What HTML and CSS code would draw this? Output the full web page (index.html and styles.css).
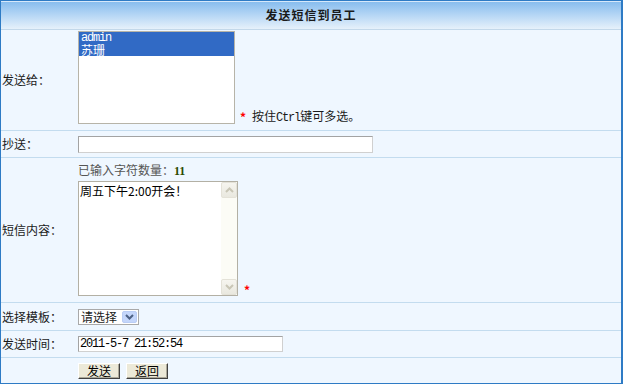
FILE: index.html
```html
<!DOCTYPE html>
<html lang="zh-CN">
<head>
<meta charset="utf-8">
<title>发送短信到员工</title>
<link rel="stylesheet" href="styles.css">
</head>
<body>
<div class="panel">
  <div class="head">发送短信到员工</div>

  <div class="row r-to">
    <div class="label">发送给<span class="colon">：</span></div>
    <div class="field f-to">
      <div class="listbox">
        <div class="opt sel mono">admin</div>
        <div class="opt sel">苏珊</div>
      </div>
      <span class="req">*</span>
      <span class="hint">按住<span class="mono">Ctrl</span>键可多选<span class="colon">。</span></span>
    </div>
  </div>

  <div class="row r-cc">
    <div class="label">抄送<span class="colon">：</span></div>
    <div class="field"><input class="txt txt-cc" type="text" value=""></div>
  </div>

  <div class="row r-msg">
    <div class="label">短信内容<span class="colon">：</span></div>
    <div class="field f-msg">
      <div class="count">已输入字符数量<span class="colon">：</span><b class="num">11</b></div>
      <div class="msg-line">
        <div class="ta">
          <textarea class="ta-text">周五下午2:00开会！</textarea>
          <div class="sb">
            <div class="sb-btn"><svg width="9" height="6" viewBox="0 0 9 6"><path d="M1 5 L4.5 1.5 L8 5" fill="none" stroke="#c9c6b6" stroke-width="2"/></svg></div>
            <div class="sb-btn"><svg width="9" height="6" viewBox="0 0 9 6"><path d="M1 1 L4.5 4.5 L8 1" fill="none" stroke="#c9c6b6" stroke-width="2"/></svg></div>
          </div>
        </div>
        <span class="req req-msg">*</span>
      </div>
    </div>
  </div>

  <div class="row r-tpl">
    <div class="label">选择模板<span class="colon">：</span></div>
    <div class="field">
      <div class="dropdown">
        <span class="dd-text">请选择</span>
        <span class="dd-btn"><svg width="9" height="6" viewBox="0 0 9 6"><path d="M1 1 L4.5 4.5 L8 1" fill="none" stroke="#4d6185" stroke-width="2"/></svg></span>
      </div>
    </div>
  </div>

  <div class="row r-time">
    <div class="label">发送时间<span class="colon">：</span></div>
    <div class="field"><input class="txt txt-time mono" type="text" value="2011-5-7 21:52:54"></div>
  </div>

  <div class="row r-btn">
    <div class="label"></div>
    <div class="field f-btn">
      <button class="btn" type="button">发送</button>
      <button class="btn" type="button">返回</button>
    </div>
  </div>
</div>
</body>
</html>
```

FILE: styles.css
```css
html, body {
  margin: 0;
  padding: 0;
}

body {
  font: 12px "Noto Sans CJK SC", "Liberation Sans", sans-serif;
  color: #1a1a1a;
  background: #ffffff;
}

.panel {
  width: 623px;
  height: 384px;
  box-sizing: border-box;
  border: 1px solid #2e7bc5;
  border-right-width: 2px;
  background: #eff7ff;
}

.head {
  height: 28px;
  border-bottom: 1px solid #c3d8ea;
  background: linear-gradient(#84bbee, #e6f1fb);
  box-shadow: inset 0 1px 0 #d6e8fa;
  display: flex;
  align-items: center;
  justify-content: center;
  font-weight: bold;
  letter-spacing: 1px;
  line-height: 14px;
  color: #1a1a1a;
}

.row {
  display: grid;
  grid-template-columns: 77px 1fr;
  align-items: center;
  border-bottom: 1px solid #c3dcef;
}

.row:last-child {
  border-bottom: none;
}

.r-to { height: 100px; }
.r-cc { height: 26px; }
.r-msg { height: 144px; }
.r-tpl { height: 27px; }
.r-time { height: 26px; }
.r-btn { height: 25px; }

.label {
  padding-left: 1px;
  line-height: 14px;
  white-space: nowrap;
}

.colon {
  font-family: "Noto Sans CJK TC", "Noto Sans CJK SC", sans-serif;
}

.field {
  display: flex;
  align-items: center;
  line-height: 14px;
}

.mono {
  font-family: "Liberation Mono", "DejaVu Sans Mono", monospace;
  letter-spacing: -1.2px;
}

/* 发送给 */
.f-to {
  align-self: start;
  align-items: flex-end;
  padding-top: 1px;
}

.listbox {
  width: 157px;
  height: 93px;
  box-sizing: border-box;
  border: 1px solid #b7b4a8;
  background: #ffffff;
}

.opt {
  height: 12px;
  line-height: 12px;
  padding-left: 2px;
  white-space: nowrap;
}

.opt.sel {
  background: #316ac5;
  color: #ffffff;
}

.req {
  color: #ff0000;
  margin-left: 5px;
  line-height: 14px;
  font-weight: bold;
}

.hint {
  margin-left: 6px;
  margin-bottom: -1px;
  white-space: nowrap;
}

/* 抄送 */
.txt {
  box-sizing: border-box;
  height: 17px;
  margin: 0;
  padding: 0 1px;
  border: 1px solid;
  border-color: #a3a3a3 #d0d0d0 #d0d0d0 #a3a3a3;
  background: #ffffff;
  font: 12px "Noto Sans CJK SC", sans-serif;
  color: #000000;
  outline: none;
}

.txt-cc {
  width: 295px;
}

.txt-time {
  width: 205px;
  height: 16px;
  font-family: "Liberation Mono", "DejaVu Sans Mono", monospace;
  letter-spacing: -1.2px;
}

/* 短信内容 */
.f-msg {
  align-self: start;
  flex-direction: column;
  align-items: flex-start;
  padding-top: 5px;
}

.count {
  color: #555555;
  height: 14px;
}

.num {
  color: #2a4a00;
  font-family: "Liberation Serif", serif;
  font-size: 12px;
}

.msg-line {
  display: flex;
  align-items: flex-end;
  margin-top: 4px;
}

.ta {
  width: 160px;
  height: 115px;
  box-sizing: border-box;
  border: 1px solid #b3b0a4;
  background: #ffffff;
  display: flex;
}

.ta-text {
  flex: 1;
  min-width: 0;
  margin: 0;
  border: none;
  padding: 2px 1px;
  resize: none;
  overflow: hidden;
  outline: none;
  font: 12px "Noto Sans CJK SC", sans-serif;
  line-height: 14px;
  color: #000000;
  background: #ffffff;
}

.sb {
  width: 16px;
  background: #fcfcf6;
  display: flex;
  flex-direction: column;
  justify-content: space-between;
}

.sb-btn {
  height: 16px;
  box-sizing: border-box;
  border: 1px solid #e4e2d8;
  border-radius: 2px;
  background: linear-gradient(#f6f5ef, #e9e8df);
  display: flex;
  align-items: center;
  justify-content: center;
}

.req-msg {
  margin-left: 6px;
  margin-bottom: -1px;
}

/* 选择模板 */
.dropdown {
  width: 61px;
  height: 16px;
  box-sizing: border-box;
  border: 1px solid #a9a9a9;
  background: #ffffff;
  display: flex;
  align-items: center;
  justify-content: space-between;
  padding: 1px;
}

.dd-text {
  padding-left: 1px;
  line-height: 12px;
}

.dd-btn {
  width: 15px;
  height: 12px;
  box-sizing: border-box;
  border: 1px solid #bacdf5;
  border-radius: 2px;
  background: #c4d6fb;
  display: flex;
  align-items: center;
  justify-content: center;
}

/* 按钮 */
.f-btn {
  gap: 6px;
}

.btn {
  width: 42px;
  height: 16px;
  box-sizing: border-box;
  margin: 0;
  padding: 0;
  border: 1px solid;
  border-color: #ffffff #404040 #404040 #ffffff;
  box-shadow: inset -1px -1px 0 #aca899;
  background: #ece9d8;
  font: 12px "Noto Sans CJK SC", sans-serif;
  line-height: 12px;
  color: #000000;
}
```
